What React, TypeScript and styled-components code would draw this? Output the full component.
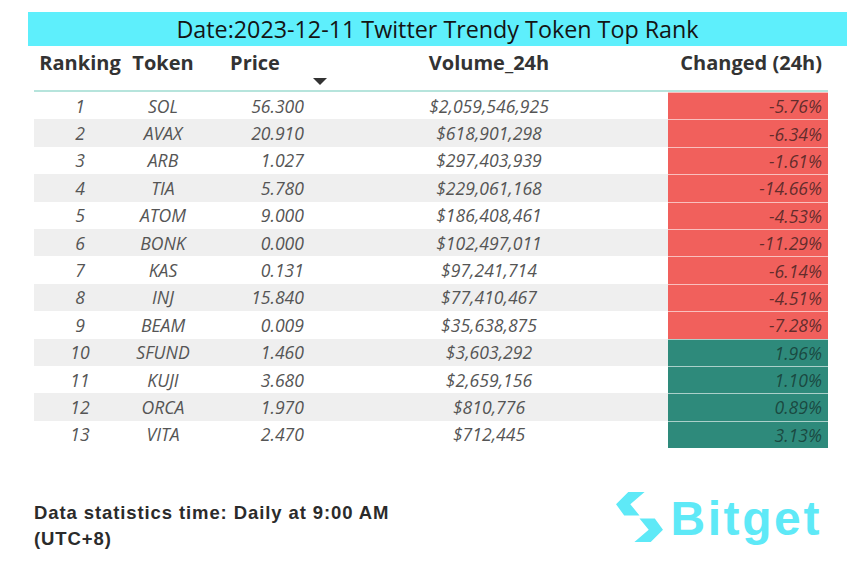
import React from "react";
import styled, { createGlobalStyle } from "styled-components";

const Global = createGlobalStyle`
  html, body { margin: 0; padding: 0; background: #ffffff; }
  body { width: 860px; height: 583px; overflow: hidden; }
`;

type Row = { rank: number; token: string; price: string; volume: string; change: string; up: boolean };

const rows: Row[] = [
  { rank: 1, token: "SOL", price: "56.300", volume: "$2,059,546,925", change: "-5.76%", up: false },
  { rank: 2, token: "AVAX", price: "20.910", volume: "$618,901,298", change: "-6.34%", up: false },
  { rank: 3, token: "ARB", price: "1.027", volume: "$297,403,939", change: "-1.61%", up: false },
  { rank: 4, token: "TIA", price: "5.780", volume: "$229,061,168", change: "-14.66%", up: false },
  { rank: 5, token: "ATOM", price: "9.000", volume: "$186,408,461", change: "-4.53%", up: false },
  { rank: 6, token: "BONK", price: "0.000", volume: "$102,497,011", change: "-11.29%", up: false },
  { rank: 7, token: "KAS", price: "0.131", volume: "$97,241,714", change: "-6.14%", up: false },
  { rank: 8, token: "INJ", price: "15.840", volume: "$77,410,467", change: "-4.51%", up: false },
  { rank: 9, token: "BEAM", price: "0.009", volume: "$35,638,875", change: "-7.28%", up: false },
  { rank: 10, token: "SFUND", price: "1.460", volume: "$3,603,292", change: "1.96%", up: true },
  { rank: 11, token: "KUJI", price: "3.680", volume: "$2,659,156", change: "1.10%", up: true },
  { rank: 12, token: "ORCA", price: "1.970", volume: "$810,776", change: "0.89%", up: true },
  { rank: 13, token: "VITA", price: "2.470", volume: "$712,445", change: "3.13%", up: true },
];

const Page = styled.div`
  width: 860px;
  height: 583px;
  box-sizing: border-box;
  padding-top: 12px;
  display: flex;
  flex-direction: column;
  font-family: "Open Sans", "Noto Sans", sans-serif;
`;

const TitleBar = styled.div`
  margin-left: 28px;
  width: 819px;
  height: 34px;
  background: #5eeffc;
  display: flex;
  align-items: center;
  justify-content: center;
  font-size: 23.3px;
  color: #141414;
`;

const Table = styled.div`
  margin-left: 34px;
  width: 794px;
  display: grid;
  grid-template-columns: 92px 74px 110px 358px 160px;
`;

const HeadCell = styled.div<{ $align: "left" | "center" | "right" }>`
  position: relative;
  height: 46px;
  box-sizing: border-box;
  padding-top: 3px;
  padding-right: ${(p) => (p.$align === "right" ? "6px" : "0")};
  text-align: ${(p) => p.$align};
  font-weight: 700;
  font-size: 20px;
  color: #333333;
  border-bottom: 2px solid #b6e4dc;
  white-space: nowrap;
`;

const SortArrow = styled.span`
  position: absolute;
  left: 113px;
  top: 32px;
  width: 0;
  height: 0;
  border-left: 7px solid transparent;
  border-right: 7px solid transparent;
  border-top: 7px solid #333333;
`;

const Cell = styled.div<{ $align: "left" | "center" | "right"; $shade: boolean }>`
  height: 27.4px;
  box-sizing: border-box;
  display: flex;
  align-items: center;
  justify-content: ${(p) => (p.$align === "right" ? "flex-end" : p.$align === "center" ? "center" : "flex-start")};
  padding-right: ${(p) => (p.$align === "right" ? "6px" : "0")};
  background: ${(p) => (p.$shade ? "#efefef" : "#ffffff")};
  font-style: italic;
  font-size: 17.6px;
  color: #555555;
  white-space: nowrap;
`;

const ChangeCell = styled.div<{ $up: boolean }>`
  height: 27.4px;
  box-sizing: border-box;
  display: flex;
  align-items: center;
  justify-content: flex-end;
  padding-right: 6px;
  background: ${(p) => (p.$up ? "#2e8a7b" : "#f1605c")};
  border-top: 1px solid rgba(255, 255, 255, 0.6);
  font-style: italic;
  font-size: 17.6px;
  color: ${(p) => (p.$up ? "rgba(20, 50, 45, 0.75)" : "rgba(60, 30, 30, 0.8)")};
  white-space: nowrap;
`;

const Footer = styled.div`
  flex: 1;
  display: flex;
  justify-content: space-between;
  align-items: flex-start;
  padding: 42px 40px 0 34px;
`;

const Note = styled.div`
  margin-top: 10px;
  font-family: "Liberation Sans", Arial, sans-serif;
  font-weight: 700;
  font-size: 18.5px;
  letter-spacing: 0.9px;
  line-height: 26px;
  color: #2b2b2b;
`;

const Logo = styled.div`
  display: flex;
  align-items: center;
  gap: 7px;
  color: #5ee9f7;
`;

const LogoText = styled.span`
  font-family: "Liberation Sans", Arial, sans-serif;
  font-weight: 700;
  font-size: 48px;
  line-height: 50px;
  letter-spacing: 2.6px;
  margin-right: -2px;
  padding-top: 4px;
`;

const Mark = () => (
  <svg width="47" height="50" viewBox="0 0 46 49">
    <path d="M12 0 H28 L14 12 L23 23 H8 L0 12 Z" fill="currentColor" />
    <path d="M34 49 H18 L32 37 L23 26 H38 L46 37 Z" fill="currentColor" />
  </svg>
);

export default function App() {
  return (
    <>
      <Global />
      <Page>
        <TitleBar>Date:2023-12-11 Twitter Trendy Token Top Rank</TitleBar>
        <Table>
          <HeadCell $align="center">Ranking</HeadCell>
          <HeadCell $align="center">Token</HeadCell>
          <HeadCell $align="center">
            Price
            <SortArrow />
          </HeadCell>
          <HeadCell $align="center">Volume_24h</HeadCell>
          <HeadCell $align="right">Changed (24h)</HeadCell>
          {rows.map((r, i) => {
            const shade = i % 2 === 1;
            return (
              <React.Fragment key={r.rank}>
                <Cell $align="center" $shade={shade}>{r.rank}</Cell>
                <Cell $align="center" $shade={shade}>{r.token}</Cell>
                <Cell $align="right" $shade={shade}>{r.price}</Cell>
                <Cell $align="center" $shade={shade}>{r.volume}</Cell>
                <ChangeCell $up={r.up}>{r.change}</ChangeCell>
              </React.Fragment>
            );
          })}
        </Table>
        <Footer>
          <Note>
            Data statistics time: Daily at 9:00 AM
            <br />
            (UTC+8)
          </Note>
          <Logo>
            <Mark />
            <LogoText>Bitget</LogoText>
          </Logo>
        </Footer>
      </Page>
    </>
  );
}
